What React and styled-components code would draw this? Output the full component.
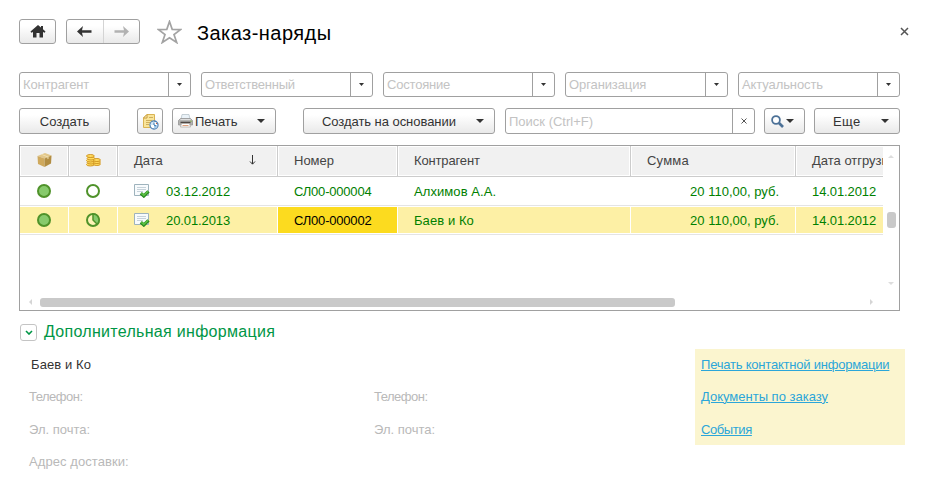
import React from 'react';
import styled, { createGlobalStyle } from 'styled-components';

const Global = createGlobalStyle`
  * { box-sizing: border-box; }
  body { margin: 0; background: #fff; font-family: "Liberation Sans", Arial, sans-serif; font-size: 13px; color: #333; }
  #root { width: 926px; height: 488px; overflow: hidden; }
  svg { display: block; flex: none; }
`;

const Page = styled.main`
  width: 926px;
  height: 488px;
  padding: 19px 0 0 19px;
`;

const TitleBar = styled.header`
  display: flex;
  align-items: center;
  height: 25px;
  width: 890px;
`;

const Button = styled.button`
  display: flex;
  align-items: center;
  justify-content: ${(p) => p.$justify || 'center'};
  flex: none;
  width: ${(p) => p.$w}px;
  height: ${(p) => p.$h || 26}px;
  margin: 0 0 0 ${(p) => p.$gap || 0}px;
  padding: ${(p) => p.$pad || '0'};
  border: 1px solid #a0a0a0;
  border-radius: 3px;
  background: linear-gradient(#fff 25%, #e9e9e9);
  font: 13px "Liberation Sans", Arial, sans-serif;
  color: #333;
`;

const NavGroup = styled(Button).attrs({ as: 'div' })``;

const NavHalf = styled.span`
  display: flex;
  flex: 1;
  height: 100%;
  align-items: center;
  justify-content: center;
  & + & { border-left: 1px solid #d4d4d4; }
`;

const StarWrap = styled.span`
  margin: 0 0 0 17px;
`;

const Title = styled.h1`
  margin: 3px 0 0 15px;
  font-size: 20px;
  font-weight: 400;
  line-height: 24px;
  letter-spacing: 0.45px;
  color: #000;
`;

const CloseIcon = styled.svg`
  margin-left: auto;
`;

const Filters = styled.div`
  display: flex;
  gap: 10px;
  margin-top: 28px;
`;

const Field = styled.div`
  display: flex;
  flex: none;
  width: ${(p) => p.$w}px;
  height: ${(p) => p.$h || 25}px;
  margin-left: ${(p) => p.$gap || 0}px;
  border: 1px solid #a0a0a0;
  border-radius: 3px;
  background: #fff;
`;

const Placeholder = styled.span`
  flex: 1;
  padding: ${(p) => p.$top || 4}px 0 0 3px;
  line-height: 15px;
  color: #c3c3c3;
`;

const FieldButton = styled.span`
  display: flex;
  align-items: center;
  justify-content: center;
  width: 22px;
  border-left: 1px solid #a0a0a0;
`;

const Toolbar = styled.div`
  display: flex;
  margin-top: 11px;
`;

const Spaced = styled.span`
  letter-spacing: ${(p) => p.$ls || 0}px;
  white-space: nowrap;
`;

const ButtonText = styled(Spaced)`
  margin: 0 auto 0 ${(p) => p.$left || 0}px;
`;

const TableFrame = styled.section`
  display: grid;
  grid-template-columns: 863px 16px;
  grid-template-rows: 147px 17px;
  width: 881px;
  height: 166px;
  margin-top: 11px;
  border: 1px solid #a0a0a0;
`;

const Table = styled.div`
  overflow: hidden;
`;

const Row = styled.div`
  display: grid;
  grid-template-columns: 49px 49px 160px 120px 233px 165px 87px;
  height: 29px;
  padding: 1px 0;
  border-bottom: 1px solid #e4e4e4;
  color: #008000;
`;

const HeadRow = styled(Row)`
  height: 31px;
  border-bottom-color: #ccc;
  color: #444;
`;

const Cell = styled.div`
  display: flex;
  align-items: center;
  justify-content: ${(p) => p.$justify || 'flex-start'};
  padding: 0 16px;
  border-right: 1px solid #fff;
  background: ${(p) => (p.$current ? '#fcdb1f' : p.$selected ? '#fdf0a5' : '#fff')};
  color: ${(p) => (p.$current ? '#000' : 'inherit')};
  white-space: nowrap;
  overflow: hidden;
  &:last-child { border-right: 0; padding-right: 0; }
`;

const IconCell = styled(Cell)`
  justify-content: center;
  padding: 0;
`;

const HeadCell = styled.div`
  display: flex;
  align-items: center;
  justify-content: ${(p) => (p.$icon ? 'center' : 'space-between')};
  height: 30px;
  margin: -1px 1px 0 0;
  padding: ${(p) => (p.$icon ? '0 0 2px' : '0 20px 2px 15px')};
  border: 1px solid #fff;
  box-shadow: 1px 0 0 #ccc;
  background: #f1f1f1;
  white-space: nowrap;
  overflow: hidden;
  &:last-child { margin-right: 0; padding-right: 0; border-right: 0; box-shadow: none; }
`;

const DateText = styled(Spaced)`
  margin-left: 16px;
`;

const VScroll = styled.div`
  display: flex;
  flex-direction: column;
  align-items: center;
  padding-top: 9px;
`;

const VThumb = styled.div`
  width: 9px;
  height: 16px;
  margin: 54px 0 54px;
  border-radius: 3px;
  background: #c9c9c9;
`;

const HScroll = styled.div`
  display: flex;
  align-items: center;
  padding: 1px 0 0 9px;
`;

const HThumb = styled.div`
  width: 635px;
  height: 9px;
  margin: 0 195px 0 8px;
  border-radius: 3px;
  background: #c9c9c9;
`;

const SectionHead = styled.div`
  display: flex;
  align-items: center;
  height: 18px;
  margin: 12px 0 0 1px;
`;

const Toggle = styled.span`
  display: flex;
  align-items: center;
  justify-content: center;
  width: 17px;
  height: 17px;
  border: 1px solid #c4c4c4;
  border-radius: 3px;
`;

const SectionTitle = styled.h2`
  margin: 0 0 0 7px;
  font-size: 16px;
  font-weight: 400;
  letter-spacing: 0.3px;
  color: #009646;
`;

const Details = styled.section`
  display: grid;
  grid-template-columns: 345px 321px 210px;
  margin: 8px 0 0 10px;
`;

const Column = styled.div`
  display: grid;
  grid-template-rows: 32px 33px 32px 32px;
  align-content: start;
  line-height: 32px;
  color: #b9b9b9;
`;

const Client = styled(Spaced)`
  padding-left: 2px;
  color: #333;
`;

const Links = styled.nav`
  display: grid;
  grid-template-rows: 32px 33px 31px;
  height: 96px;
  padding-left: 6px;
  line-height: 32px;
  background: #fbf5cf;
`;

const Link = styled.a`
  color: #2ba6d9;
  text-decoration: underline;
  text-decoration-thickness: 1px;
  text-underline-offset: 1px;
  letter-spacing: ${(p) => p.$ls || 0}px;
  white-space: nowrap;
`;

const Down = ({ w = 8, h = 4, fill = '#333' }) => (
  <svg width={w} height={h} viewBox="0 0 8 4" preserveAspectRatio="none"><path d="M0 0h8L4 4z" fill={fill} /></svg>
);
const Up = () => <svg width="6" height="3"><path d="M0 3h6L3 0z" fill="#ddd" /></svg>;
const Side = ({ left }) => (
  <svg width="3" height="6"><path d={left ? 'M3 0v6L0 3z' : 'M0 0v6l3-3z'} fill="#d5d5d5" /></svg>
);

const Home = () => (
  <svg width="16" height="13" viewBox="0 0 16 13">
    <path d="M8 0 .5 6.5 1.300 7.700 3 7v5.500h3.500V8h3v4.500H13V7l1.700.7.8-1.200L13 4.300V1h-2v1.600z" fill="#333" />
  </svg>
);
const Arrow = ({ right }) => (
  <svg width="15" height="11" viewBox="0 0 15 11">
    <g transform={right ? 'translate(15 0) scale(-1 1)' : undefined}>
      <path d="M0 5.500 6 0 5 4.300h9.500v2.400H5L6 11z" fill={right ? '#b2b2b2' : '#333'} />
    </g>
  </svg>
);
const Star = () => (
  <svg width="25" height="24" viewBox="0 0 25 24">
    <path d="m12.500 1.500 2.700 7.800 8.300.3-6.500 5 2.700 7.900-7.200-4.700-7.200 4.700L8 14.600l-6.500-5 8.300-.3z" fill="#fff" stroke="#a3a3a3" strokeWidth="1.700" />
  </svg>
);
const Report = () => (
  <svg width="17" height="17" viewBox="0 0 17 17">
    <path d="M5 1.500h7.500v13h-11V5z" fill="#f8e49a" stroke="#d9b353" />
    <path d="M1.500 5H5V1.500z" fill="#fff6cf" stroke="#c99c38" />
    <path d="M7 4.500h4M4 7.500h6M4 9.500h4M4 11.500h3" stroke="#cfae5c" />
    <circle cx="12" cy="12" r="4" fill="#fff" stroke="#4d7fb4" strokeWidth="1.300" />
    <path d="M12 12V8.500A3.500 3.500 0 0 0 8.500 12z" fill="#cfe6f6" />
    <path d="M12 12h3.500A3.500 3.500 0 0 1 12 15.500z" fill="#a9cdea" />
    <path d="M12 9.500V12l2 1" fill="none" stroke="#3472ad" />
    <path d="M14.500 10v1" stroke="#db5a38" />
  </svg>
);
const Printer = () => (
  <svg width="15" height="14" viewBox="0 0 15 14">
    <path d="M4 .5h7l1 5H3z" fill="#eaf2f8" stroke="#b9c4cc" strokeWidth=".8" />
    <path d="M2.500 4.500h10l2 2V11h-14V6.500z" fill="#b4b4b2" stroke="#949494" strokeWidth=".8" />
    <path d="M2.500 5.500h10" stroke="#dedede" />
    <path d="M2.500 8.500h10" stroke="#4e4844" strokeWidth="1.600" />
    <path d="M3.500 9.500h8l1 3.500h-10z" fill="#fff" stroke="#a9a09a" strokeWidth=".7" />
    <path d="M4.500 11.500h6" stroke="#e0a07c" />
    <circle cx="13" cy="7.200" r=".7" fill="#81b542" />
  </svg>
);
const Magnifier = () => (
  <svg width="13" height="13" viewBox="0 0 13 13">
    <circle cx="5" cy="5" r="3.900" fill="#fff" stroke="#4c7197" strokeWidth="1.800" />
    <path d="m8 8 4 4" stroke="#4c7197" strokeWidth="2.600" />
  </svg>
);
const Box = () => (
  <svg width="15" height="14" viewBox="0 0 15 14">
    <path d="M.5 3 8 0l6.500 2.500L7.500 5.500z" fill="#e2c78a" />
    <path d="M.5 3l7 2.500V14L1 11z" fill="#cfa95d" />
    <path d="M14.500 2.500l-7 3V14l6.500-3.500z" fill="#b28d42" />
    <path d="m4 1.600 6.500 2.600v2l1-.4V3.800L5 1.200z" fill="#f3e3b6" />
  </svg>
);
const Coins = () => (
  <svg width="15" height="13" viewBox="0 0 15 13">
    {[10.500, 8.500, 6.500, 4.500, 2].map((y, i) => (
      <ellipse key={y} cx={i % 2 ? 5 : 4.400} cy={y} rx="3.900" ry="1.500" fill="#ffdc60" stroke="#cc8f1b" strokeWidth=".9" />
    ))}
    {[10, 8, 6].map((y) => (
      <ellipse key={y} cx="10.900" cy={y} rx="3.500" ry="1.500" fill="#ffdc60" stroke="#cc8f1b" strokeWidth=".9" />
    ))}
  </svg>
);
const Status = ({ kind }) => (
  <svg width="14" height="14" viewBox="0 0 14 14">
    <circle cx="7" cy="7" r="6" fill={kind === 'full' ? '#87ca6c' : '#fff'} fillOpacity={kind === 'part' ? 0.2 : 1} stroke="#4f922a" strokeWidth="2" />
    {kind === 'part' && <path d="M7 1v6l4.200 4.200A6 6 0 0 0 7 1z" fill="#87ca6c" stroke="#4f922a" strokeWidth="1.500" />}
  </svg>
);
const Doc = () => (
  <svg width="16" height="14" viewBox="0 0 16 14">
    <path d="M.5.5h14v11H.5z" fill="#f8fbfd" stroke="#9eb3bd" />
    <path d="M3 3.500h9M3 5.500h9M3 7.500h6" stroke="#c6d2da" />
    <path d="m6.800 9.300 3 2.700 4.700-4.700" fill="none" stroke="#288b20" strokeWidth="3.200" />
    <path d="m7.300 9.200 2.500 2.200 4.200-4.100" fill="none" stroke="#5cc144" strokeWidth="1.500" />
  </svg>
);
const SortArrow = () => (
  <svg width="7" height="10"><path d="M3.500 0v9M1 6.500l2.500 2.700L6 6.500" fill="none" stroke="#333" /></svg>
);

const filters = [
  ['Контрагент', 172, -0.1], ['Ответственный', 172, -0.23], ['Состояние', 172, -0.2],
  ['Организация', 163, -0.1], ['Актуальность', 162, -0.1],
];
const rows = [
  { pay: 'empty', date: '03.12.2012', num: 'СЛ00-000004', who: 'Алхимов А.А.' },
  { pay: 'part', date: '20.01.2013', num: 'СЛ00-000002', who: 'Баев и Ко', selected: true },
];

export default function App() {
  return (
    <Page>
      <Global />
      <TitleBar>
        <Button $w={37} $h={25}><Home /></Button>
        <NavGroup $w={74} $h={25} $gap={10}>
          <NavHalf><Arrow /></NavHalf>
          <NavHalf><Arrow right /></NavHalf>
        </NavGroup>
        <StarWrap><Star /></StarWrap>
        <Title>Заказ-наряды</Title>
        <CloseIcon width="9" height="9"><path d="m1 1 7 7M8 1 1 8" stroke="#555" strokeWidth="1.500" /></CloseIcon>
      </TitleBar>

      <Filters>
        {filters.map(([label, w, ls]) => (
          <Field key={label} $w={w}>
            <Placeholder><Spaced $ls={ls}>{label}</Spaced></Placeholder>
            <FieldButton><Down w={5} h={3} /></FieldButton>
          </Field>
        ))}
      </Filters>

      <Toolbar>
        <Button $w={91}><Spaced>Создать</Spaced></Button>
        <Button $w={26} $gap={27}><Report /></Button>
        <Button $w={104} $gap={9} $pad="0 10px 0 5px">
          <Printer /><ButtonText $left={2}>Печать</ButtonText><Down />
        </Button>
        <Button $w={192} $gap={27} $pad="0 10px 0 18px">
          <ButtonText $ls={-0.05}>Создать на основании</ButtonText><Down />
        </Button>
        <Field $w={250} $h={26} $gap={10}>
          <Placeholder $top={5}><Spaced>Поиск (Ctrl+F)</Spaced></Placeholder>
          <FieldButton><svg width="6" height="6"><path d="m.5.5 5 5m0-5-5 5" stroke="#555" /></svg></FieldButton>
        </Field>
        <Button $w={41} $gap={9} $justify="space-between" $pad="0 10px 0 6px"><Magnifier /><Down /></Button>
        <Button $w={86} $gap={9} $pad="0 10px 0 18px"><ButtonText $ls={0.4}>Еще</ButtonText><Down /></Button>
      </Toolbar>

      <TableFrame>
        <Table>
          <HeadRow>
            <HeadCell $icon><Box /></HeadCell>
            <HeadCell $icon><Coins /></HeadCell>
            <HeadCell><Spaced>Дата</Spaced><SortArrow /></HeadCell>
            <HeadCell><Spaced>Номер</Spaced></HeadCell>
            <HeadCell><Spaced $ls={-0.15}>Контрагент</Spaced></HeadCell>
            <HeadCell><Spaced $ls={0.2}>Сумма</Spaced></HeadCell>
            <HeadCell><Spaced>Дата отгрузки</Spaced></HeadCell>
          </HeadRow>
          {rows.map((r) => (
            <Row key={r.num}>
              <IconCell $selected={r.selected}><Status kind="full" /></IconCell>
              <IconCell $selected={r.selected}><Status kind={r.pay} /></IconCell>
              <Cell $selected={r.selected}><Doc /><DateText $ls={-0.1}>{r.date}</DateText></Cell>
              <Cell $selected={r.selected} $current={r.selected}><Spaced $ls={-0.2}>{r.num}</Spaced></Cell>
              <Cell $selected={r.selected}><Spaced $ls={0.08}>{r.who}</Spaced></Cell>
              <Cell $selected={r.selected} $justify="flex-end"><Spaced>20 110,00, руб.</Spaced></Cell>
              <Cell $selected={r.selected}><Spaced $ls={-0.1}>14.01.2012</Spaced></Cell>
            </Row>
          ))}
        </Table>
        <VScroll><Up /><VThumb /><Down w={6} h={3} fill="#ddd" /></VScroll>
        <HScroll><Side left /><HThumb /><Side /></HScroll>
      </TableFrame>

      <SectionHead>
        <Toggle><svg width="8" height="5"><path d="m1 1 3 3 3-3" fill="none" stroke="#009646" strokeWidth="1.600" /></svg></Toggle>
        <SectionTitle>Дополнительная информация</SectionTitle>
      </SectionHead>

      <Details>
        <Column>
          <Client $ls={0.1}>Баев и Ко</Client>
          <Spaced $ls={-0.5}>Телефон:</Spaced>
          <Spaced>Эл. почта:</Spaced>
          <Spaced $ls={0.07}>Адрес доставки:</Spaced>
        </Column>
        <Column>
          <span />
          <Spaced $ls={-0.5}>Телефон:</Spaced>
          <Spaced>Эл. почта:</Spaced>
        </Column>
        <Links>
          <span><Link $ls={-0.21}>Печать контактной информации</Link></span>
          <span><Link>Документы по заказу</Link></span>
          <span><Link $ls={-0.4}>События</Link></span>
        </Links>
      </Details>
    </Page>
  );
}
